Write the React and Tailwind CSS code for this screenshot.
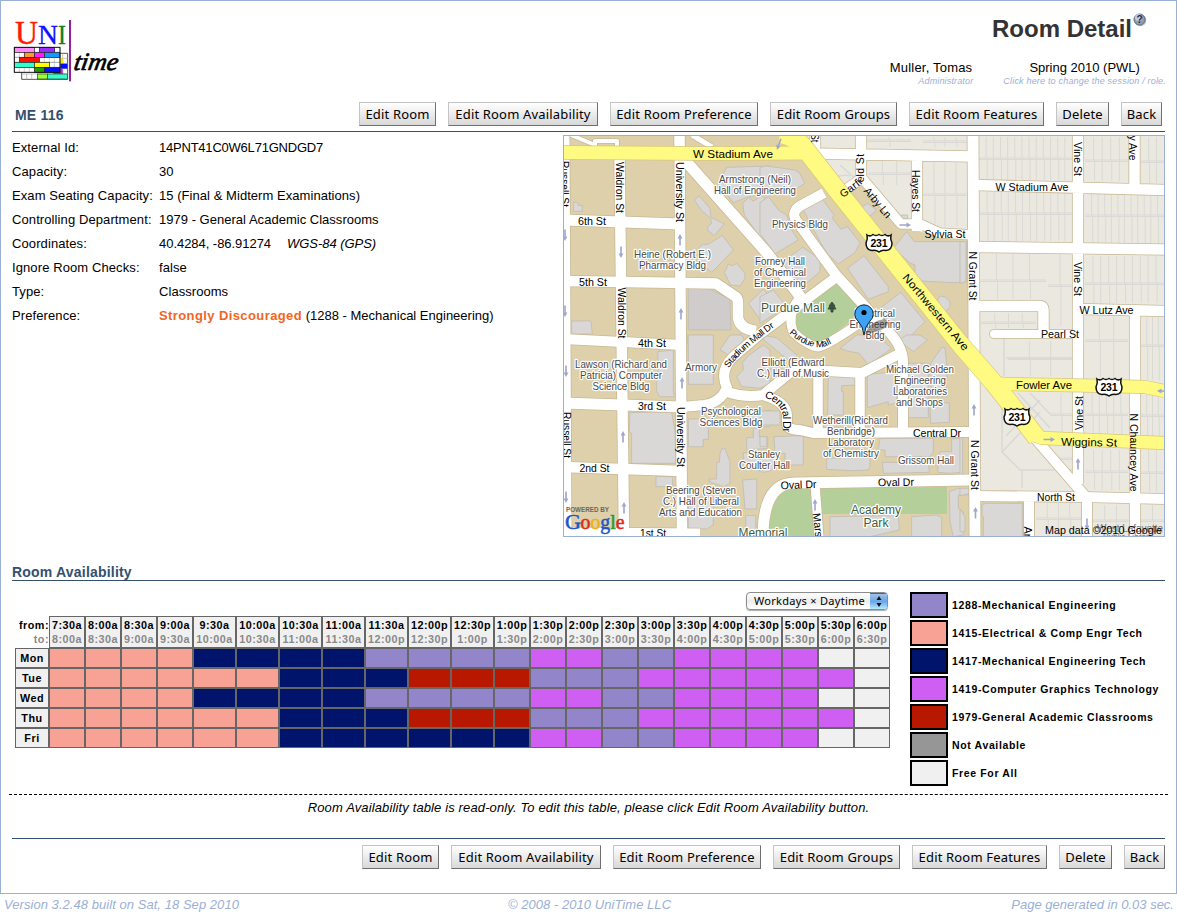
import React from "react";

const BUTTONS = [
  ["Edit Room", "w-[77px]"],
  ["Edit Room Availability", "w-[150px]"],
  ["Edit Room Preference", "w-[148px]"],
  ["Edit Room Groups", "w-[127px]"],
  ["Edit Room Features", "w-[135px]"],
  ["Delete", "w-[53px]"],
  ["Back", "w-[41px]"],
];

function Toolbar() {
  return (
    <div className="flex gap-3">
      {BUTTONS.map(([label, width]) => (
        <button
          key={label}
          className={`${width} h-6 whitespace-nowrap border border-t-[#c4c4c4] border-l-[#c4c4c4] border-r-[#707070] border-b-[#707070] bg-linear-to-b from-white to-[#d8d8d8] p-0 text-center font-['Noto_Sans','Open_Sans',sans-serif] text-[13px] leading-[21px] tracking-[0.17px] text-black`}
        >
          {label}
        </button>
      ))}
    </div>
  );
}

function Logo() {
  const bricks = [
    [43, 142, 60, "#ff8cff"], [118, 142, 46, "#9a2cff"],
    [73, 157, 30, "#ff9933"], [103, 157, 30, "#ff1eff"], [133, 157, 47, "#1498ff"],
    [58, 172, 60, "#ff1000"],
    [43, 187, 60, "#33ffcc"], [103, 187, 45, "#ffff00"],
    [103, 202, 30, "#1f9a00"], [133, 202, 47, "#0010ff"],
  ];
  const v = [43, 58, 73, 88, 103, 118, 133, 148, 163, 180];
  return (
    <svg width="112" height="68" viewBox="10 16 112 68" className="block">
      <g transform="scale(.33333)">
        <path d="M65 160H203V238H65Z" fill="#fff" stroke="#555" strokeWidth="3" />
        <path d="M65 222H203M80 222V238M95 222V238M188 160V222M180 175H203M180 190H203M180 206H203" stroke="#aaa" strokeWidth="2" />
        <path d="M180 175h10v15h-10z" fill="#f2e800" />
        <path d="M180 191h22v15h-22z" fill="#0010ff" />
        <path d="M160 206h28v16h-28z" fill="#e010e0" />
        <rect x="112" y="222" width="30" height="15" fill="#99ff33" stroke="#333" strokeWidth="2" />
        <rect x="142" y="222" width="61" height="15" fill="#33ffcc" stroke="#333" strokeWidth="2" />
        <rect x="43" y="142" width="137" height="75" fill="#fff" />
        {v.map((x) => <path key={x} d={`M${x} 142V217`} stroke="#bbb" strokeWidth="2" />)}
        {[157, 172, 187, 202].map((y) => <path key={y} d={`M43 ${y}H180`} stroke="#777" strokeWidth="2" />)}
        {bricks.map(([x, y, w, c], i) => <rect key={i} x={x} y={y} width={w} height="15" fill={c} stroke="#222" strokeWidth="2" />)}
        <rect x="43" y="142" width="137" height="75" fill="none" stroke="#111" strokeWidth="3" />
        <rect x="207" y="60" width="6" height="184" fill="#9420a0" />
      </g>
      <g fontFamily="Liberation Serif, serif">
        <text x="15" y="44" fontSize="34" fill="#ff1a00" stroke="#ff1a00" strokeWidth=".4" textLength="23" lengthAdjust="spacingAndGlyphs">U</text>
        <text x="38" y="44" fontSize="27" fill="#1010ff" stroke="#1010ff" strokeWidth=".3" textLength="20" lengthAdjust="spacingAndGlyphs">N</text>
        <text x="58" y="44" fontSize="27" fill="#128012" stroke="#128012" strokeWidth=".3" textLength="8" lengthAdjust="spacingAndGlyphs">I</text>
        <text transform="translate(73 70) skewX(-10)" fontSize="25" fontStyle="italic" fill="#000" stroke="#000" strokeWidth=".7" textLength="44" lengthAdjust="spacingAndGlyphs">time</text>
      </g>
    </svg>
  );
}

const ROADS = [
  ["M565 135L567 537", 9],
  ["M619.5 155L624 537", 10.5],
  ["M679.5 135L682 537", 10.5],
  ["M563 220L680 224", 11],
  ["M563 281L716 283.500L736 297Q738 299 738 303V318Q740 329 756 331", 10.5],
  ["M563 339L682 345", 10],
  ["M563 403L682 407", 11],
  ["M563 467L682 471", 10.5],
  ["M563 532L700 533", 9],
  ["M571 135L595 145M595 150V141H617V150", 4],
  ["M692 135L712 147", 5],
  ["M683 158L767 253L802 299", 11],
  ["M682 407L704 405Q720 403 727 388Q719 371 733 357L760 334L835 278", 10],
  ["M824 193L800 206Q791 212 796 220L836 275L882 325Q903 344 903 362V432", 10],
  ["M798 300Q787 315 793 332Q806 345 818 347Q829 345 868 317", 9],
  ["M727 392Q745 398 763 395L792 371H827L862 373L903 352", 10],
  ["M763 395Q787 402 787 416V424Q788 430 800 430L813 433L970 432", 10],
  ["M818 372V432M860 372V432", 9.5],
  ["M763 537Q763 483 795 483L970 480", 11],
  ["M815 484L819 537", 9],
  ["M973 135L975 537", 11],
  ["M812 153.5L973 156.5M815 135V152M861 135V180M917 155V231", 10.5],
  ["M842 192L862 178L901 224H920L940 233L974 235", 9.5],
  ["M975 185L1165 190M975 247L1165 249.5M1078 135V484M1134.5 135V188M1135 311V537M1078 309L1165 311", 10.5],
  ["M975 306H1040Q1043.500 306 1043.500 310V334", 10.5],
  ["M994 334H1078", 8],
  ["M975 496L1085 497L1165 499M1029 498V537M1087 496V537", 10],
  ["M1033 436L1086 497", 10],
];

const YELLOW = [
  ["M563 152.500L700 153.500L806 153", 13],
  ["M780 134Q797 137 806 150L837 190L960 344L993 382L1027 425L1037 438", 18],
  ["M990 383L1006 384L1110 386L1145 387L1165 391", 12.5],
  ["M1030 434L1042 438L1165 443", 12.5],
];

/* Building footprints, one list per 210px map tile, in thirds of a pixel. */
const BUILDINGS = [
  [560, 130, [
    "M41 215L55 220V226H67V244H41Z", "M35 573H93L97 612H35Z",
    "M403 210L418 198L450 235L453 262L493 282L462 317L443 300V290L455 280L452 265L423 240Z",
    "M417 352L430 343H445L487 316L520 360L487 395L455 427L410 390Z",
    "M493 428L505 402L517 408L530 400L555 430V445L540 468L512 465Z",
    "M385 475H445L510 508L513 600H385Z", "M382 617H460V640H382Z",
    "M500 112L630 108V190L565 200L520 218L475 160Z",
    "M548 220L565 203L580 213L605 198L630 215V340L605 328L553 255Z",
    "M565 520L598 490L610 478L630 500V560L605 575Z", "M540 610L560 640H510Z",
  ]],
  [760, 130, [
    "M0 112L20 108L105 120L118 128L135 160L103 180L0 190Z",
    "M0 218L25 200L55 240L80 255L95 300L115 330L45 372L0 310Z",
    "M130 240L188 208L222 255L217 265L243 298L262 290L300 338L285 368L235 402L205 375L180 335Z",
    "M55 405L128 352L180 388V425L130 468L95 430Z",
    "M263 415L312 377L385 470V485L325 508Z",
    "M305 232L322 220L350 240L325 262L305 250Z",
    "M400 355L440 305L463 335H620V455L580 458L465 452V405L452 400Z",
    "M360 535L422 487L495 575L430 640L395 610Z",
    "M528 520L540 498L555 500L570 515V530L555 548L535 545Z", "M425 255H443V267H425Z",
    "M0 500L40 480L80 530L0 580Z",
  ]],
  [960, 130, ["M0 335H18V455L0 460Z"]],
  [560, 335, [
    "M385 0H460V148H385Z", "M293 50L340 45V170L343 185H300L290 170V140L297 130Z",
    "M210 233L335 230L345 290L348 385H215V295L208 290Z",
    "M385 252H445V313H430V335H385Z", "M385 487H460V570L440 582L385 580Z",
    "M480 355L487 340H495L500 355L510 380V445L490 455L448 440V432H470V382H478Z",
    "M288 425H338V455H288Z", "M480 45L510 0H545L560 30L515 65Z",
    "M530 125L550 105L548 82L565 62L610 30L630 45V145L600 160L545 155Z",
    "M580 280H598V305H623V340L560 345V308H580Z", "M548 435L590 432V522H555Z",
    "M557 542H587V585H557Z", "M560 240L630 225V275H600Z", "M550 353H630V405Q580 415 550 388Z",
  ]],
  [760, 335, [
    "M0 0L50 8L112 62L90 80L0 5Z", "M240 40L290 0H350L395 40L325 90L298 55L262 48Z",
    "M415 15L440 0H480L502 15L460 50Z", "M205 122L288 120V150L245 152V170H250V240H203Z",
    "M322 118L410 110V203L385 210V200L322 218Z", "M433 85H505V248H433Z",
    "M512 85L545 38H555L560 88V185H515Z", "M510 205L568 203V262L512 265Z",
    "M360 310H520V350L510 365H375V345H355Z", "M367 382H505L508 412L370 415Z",
    "M535 360L540 350H575V312L600 310L607 395V412L570 415L533 412Z",
    "M42 305L130 302V390H75V355H45Z", "M0 228H60V270H0Z", "M200 370L330 368V395L325 405L275 407L200 403Z",
    "M0 305H20V335H0Z", "M568 470L595 460L625 463V480H595V520L610 530V600L580 605L570 560Z",
    "M455 545L530 540L545 548V605H455Z", "M210 545L415 542L418 585L330 605H210Z",
    "M0 360H40V400Q25 415 0 410Z",
  ]],
  [960, 335, ["M0 308H8V418H0Z", "M0 460H28V475L0 482Z", "M0 523L15 545V590H0Z", "M66 508L80 505H187V610H70V545L66 540Z"]],
];

/* Parcel blocks: x, top, right, bottom, horizontal split, number of lots. */
const PARCELS = [
  [979, 137, 1072, 180, 158, 13], [1085, 137, 1128, 181, 160, 5], [1141, 137, 1164, 183, 161, 3],
  [980, 192, 1072, 241, 213, 13], [1085, 194, 1164, 243, 215, 12],
  [980, 254, 1046, 299, 280, 4], [1048, 254, 1072, 326, 285, 2], [1085, 256, 1164, 303, 283, 10],
  [981, 313, 1036, 328, 322, 4], [1085, 317, 1128, 378, 340, 3], [1141, 317, 1164, 380, 345, 4],
  [1008, 341, 1072, 376, 358, 3], [867, 137, 911, 147, 140, 2], [923, 137, 967, 147, 141, 4],
  [868, 161, 911, 185, 173, 3], [923, 161, 967, 227, 194, 4], [1085, 393, 1128, 434, 414, 6],
  [1141, 395, 1164, 436, 415, 4], [1085, 450, 1128, 490, 471, 5], [1141, 450, 1164, 492, 472, 3],
  [1050, 393, 1072, 434, 414, 2], [1050, 448, 1072, 468, 458, 1],
  [1036, 503, 1081, 536, 518, 4], [1093, 505, 1128, 536, 520, 3], [1141, 505, 1164, 536, 520, 2],
];

function Parcels() {
  let d = "";
  PARCELS.forEach(([x, y, r, b, m, n]) => {
    d += `M${x} ${m}H${r}M${x} ${m + 1.5}H${r}`;
    for (let i = 1; i < n; i++) {
      const lx = x + ((r - x) * i) / n;
      d += `M${lx} ${y}V${m}M${lx + (i % 2)} ${m}V${b}`;
    }
  });
  return <path d={d} fill="none" stroke="#dad9d6" strokeWidth="1" />;
}

/* Text, centre x, centre y, length, rotation. */
const STREETS = [
  ["W Stadium Ave", 733, 154, 80, 0], ["6th St", 592, 220.5, 28, 0], ["5th St", 593, 282, 28, 0],
  ["4th St", 652, 343, 28, 0], ["3rd St", 652, 406, 28, 0], ["2nd St", 594.5, 467.500, 30, 0],
  ["1st St", 653, 532.5, 26, 0], ["Russell St", 565, 184, 46, 90], ["Waldron St", 620, 187.5, 51, 90],
  ["University St", 680, 192, 60, 90], ["Waldron St", 621.5, 313, 51, 90], ["Russell St", 566.5, 435, 46, 90],
  ["University St", 681, 437, 60, 90], ["Hayes St", 916, 191, 42, 90], ["N Grant St", 973, 276, 49, 90],
  ["N Grant St", 975, 465, 50, 90], ["Vine St", 1077.500, 159, 34, 90], ["Vine St", 1077.500, 279, 34, 90],
  ["Vine St", 1079, 413, 34, -90], ["N Chauncey Ave", 1134, 452.500, 78, 90], ["y Ave", 1133, 148, 25, 90],
  ["Ar", 1028, 532, 11, 90], ["Mars", 818, 525, 24, 83], ["St", 815, 138, 9, 90],
  ["Arby Ln", 878, 202.5, 36, 50], ["Sylvia St", 945, 234, 41, 0], ["W Stadium Ave", 1032, 186.5, 73, 0],
  ["W Lutz Ave", 1106.500, 310, 54, 0], ["Pearl St", 1060, 333.500, 38, 0], ["Fowler Ave", 1044, 385, 56, 0],
  ["Wiggins St", 1089, 442, 56, 1], ["North St", 1056, 497, 38, 0], ["Central Dr", 937, 432.500, 48, 0],
  ["Oval Dr", 798.5, 484.500, 36, -2], ["Oval Dr", 896, 482, 36, -1], ["Northwestern Ave", 936, 312, 96, 50],
];

const PLACES = [
  ["Armstrong (Neil)", 755, 179.5, 72], ["Hall of Engineering", 755, 190.500, 82],
  ["Physics Bldg", 800, 224.500, 56], ["Heine (Robert E.)", 672.500, 254.500, 77], ["Pharmacy Bldg", 672.500, 265.500, 67],
  ["Forney Hall", 780, 261.5, 50], ["of Chemical", 780, 272.500, 52], ["Engineering", 780, 283.500, 52],
  ["Electrical", 875, 313.500, 40], ["Engineering", 875, 324.5, 51], ["Bldg", 875, 335.5, 19],
  ["Elliott (Edward", 793, 362.5, 63], ["C.) Hall of Music", 793, 373.5, 72],
  ["Michael Golden", 920, 369.5, 68], ["Engineering", 920, 380.500, 52], ["Laboratories", 920, 391.5, 54], ["and Shops", 919.500, 402.500, 47],
  ["Lawson (Richard and", 621, 364.500, 92], ["Patricia) Computer", 621, 375.500, 82], ["Science Bldg", 621, 386.500, 57],
  ["Armory", 701, 367.5, 32], ["Psychological", 731, 411.5, 60], ["Sciences Bldg", 731, 422.5, 63],
  ["Wetherill(Richard", 850.500, 420.500, 75], ["Benbridge)", 851, 431.5, 48], ["Laboratory", 851, 442.500, 46], ["of Chemistry", 851, 453.500, 56],
  ["Stanley", 764, 454.5, 32], ["Coulter Hall", 764.500, 465.500, 51], ["Grissom Hall", 926, 460.500, 56],
  ["Beering (Steven", 701, 490.500, 70], ["C.) Hall of Liberal", 701, 501.500, 76], ["Arts and Education", 700.500, 512.500, 83],
];

function Shield({ x, y }) {
  return (
    <g transform={`translate(${x} ${y})`}>
      <path d="M-12 -8Q-9 -6 -6 -8.500Q-3 -6.500 0 -8.500Q3 -6.500 6 -8.500Q9 -6 12 -8Q11 -4 13 0Q13 7 7 7.500Q3 6.500 0 9Q-3 6.500 -7 7.500Q-13 7 -13 0Q-11 -4 -12 -8Z" fill="#fff" stroke="#111" strokeWidth="1.500" />
      <text textAnchor="middle" y="3.500" fontSize="10.500" fontWeight="bold" textLength="17">231</text>
    </g>
  );
}

function CampusMap() {
  const arrows = [
    [621, 252, 90], [680, 240, -90], [681, 314, -90], [565, 235, 90], [565, 311, 90], [682, 383, -90],
    [623, 437, -90], [624, 508, -90], [566, 371, 90], [566, 497, 90], [815, 505, -90], [974, 410, -90],
    [975.500, 513, -90], [1078, 464, -90], [905, 225, 0], [1049, 439.500, 0], [1087, 524, 90], [779, 144, 110], [1163, 391, 180],
  ];
  return (
    <svg width="602" height="402" viewBox="563 135 602 402" className="block shrink-0" fontFamily="Liberation Sans, Arial, sans-serif">
      <rect x="563" y="135" width="602" height="402" fill="#ddd0aa" />
      <path d="M806 135H1165V537H974V238L935 236L905 230L862 182L845 194L815 155Z" fill="#ebe8e0" />
      <path d="M844 195L862 183L900 226L940 237H974V345L960 340Z" fill="#ddd0aa" />
      <path d="M974 500H1026V537H974Z" fill="#ddd0aa" />
      <Parcels />
      <path d="M1004 338V376M1006 358H1072M1002 394V452L1020 470H1072M1002 452L1040 412M1030 393L1050 414M1018 393L1050 428M1006 436L1040 400M1022 470V488M827 188Q835 172 850 176M840 165L868 190" fill="none" stroke="#d9d8d5" strokeWidth="1.500" />
      <path d="M835 281L861 309L848 323L828 339Q814 345 802 335Q789 322 799 303Z" fill="#b5cf9a" />
      <path d="M769 537Q769 489 795 489H812L815 537Z" fill="#b5cf9a" />
      <path d="M821 488L947 487V514H821Z" fill="#b5cf9a" />
      {BUILDINGS.map(([x, y, shapes], i) => (
        <g key={i} transform={`translate(${x} ${y}) scale(.33333)`}>
          {shapes.map((d, j) => <path key={j} d={d} fill={j === 5 && i === 0 ? "#d0cccb" : "#d9d8d7"} stroke="#c2bdb2" strokeWidth="2.500" />)}
        </g>
      ))}
      <g fill="none" strokeLinejoin="round">
        {ROADS.map(([d, w], i) => <path key={i} d={d} stroke="#c8b994" strokeWidth={w + 1.6} strokeLinecap={w === 8 ? "round" : "butt"} />)}
        {ROADS.map(([d, w], i) => <path key={i} d={d} stroke="#fff" strokeWidth={w} strokeLinecap={w === 8 ? "round" : "butt"} />)}
        {YELLOW.map(([d, w], i) => <path key={i} d={d} stroke="#d9c77c" strokeWidth={w + 1.4} />)}
        {YELLOW.map(([d, w], i) => <path key={i} d={d} stroke="#fffa82" strokeWidth={w} />)}
      </g>
      {arrows.map(([x, y, a], i) => (
        <path key={i} transform={`translate(${x} ${y}) rotate(${a})`} d="M-5.500 -.8H1.500V-2.400L6 0L1.500 2.400V.8H-5.500Z" fill="#a0a5cc" />
      ))}
      <g fontSize="11" fill="#000" textAnchor="middle">
        {STREETS.map(([t, x, y, w, a], i) => (
          <text key={i} transform={`translate(${x} ${y}) rotate(${a})`} y="4" textLength={w} lengthAdjust="spacingAndGlyphs">{t}</text>
        ))}
      </g>
      <defs>
        <path id="garfield" d="M843 198L858 187Q864 183 864 178V140" />
        <path id="central" d="M764 397Q782 404 783 417V440" />
        <path id="stadium-mall" d="M729 368Q737 354 777 325" />
        <path id="purdue-mall" d="M789 333Q806 349 823 347Q829 345 834 342" />
      </defs>
      <g fontSize="10.500" fill="#000">
        <text><textPath href="#garfield" textLength="54">Garfield St</textPath></text>
        <text><textPath href="#central" textLength="44">Central Dr</textPath></text>
        <text fontSize="9.500"><textPath href="#stadium-mall" textLength="62">Stadium Mall Dr</textPath></text>
        <text fontSize="9"><textPath href="#purdue-mall" textLength="47">Purdue Mall</textPath></text>
      </g>
      <g fontSize="10.500" fill="#484848" textAnchor="middle" stroke="#fff" strokeWidth="2.400" strokeLinejoin="round" paintOrder="stroke">
        {PLACES.map(([t, x, y, w], i) => (
          <text key={i} x={x} y={y + 3.5} textLength={w} lengthAdjust="spacingAndGlyphs">{t}</text>
        ))}
        <g fill="#3d5f3d" fontSize="12">
          <text x="793" y="311.500" textLength="64" lengthAdjust="spacingAndGlyphs">Purdue Mall</text>
          <text x="876" y="514" textLength="50" lengthAdjust="spacingAndGlyphs">Academy</text>
          <text x="876" y="527" textLength="25" lengthAdjust="spacingAndGlyphs">Park</text>
          <text x="763" y="537" textLength="49" lengthAdjust="spacingAndGlyphs">Memorial</text>
        </g>
      </g>
      <path d="M832 302L835 306H834L836 309H833V312H831V309H828L830 306H829Z" fill="#3d4f3d" stroke="#3d4f3d" />
      <Shield x={879} y={243} />
      <Shield x={1109} y={387} />
      <Shield x={1017} y={417} />
      <path d="M865 334Q870 321 884 319Q891 322 885 328Q877 332 865 334Z" fill="#333" opacity=".45" />
      <path d="M864 335Q863 326 858 321A9.200 9.200 0 1 1 870 321Q865 326 864 335Z" fill="#3fa3f5" stroke="#123" strokeWidth="1" />
      <circle cx="864" cy="312.500" r="2.600" fill="#000" />
      <text x="566" y="512" fontSize="7" fontWeight="bold" fill="#6b675c" textLength="43" lengthAdjust="spacingAndGlyphs">POWERED BY</text>
      <g fontFamily="Liberation Serif, serif" strokeWidth=".5">
        <text x="565" y="529" fontSize="22" fill="#1c56c8" stroke="#1c56c8" textLength="16" lengthAdjust="spacingAndGlyphs">G</text>
        <text x="580.500" y="529" fontSize="21" textLength="44" lengthAdjust="spacingAndGlyphs">
          <tspan fill="#dc2a20" stroke="#dc2a20">o</tspan><tspan fill="#eeb211" stroke="#eeb211">o</tspan><tspan fill="#1c56c8" stroke="#1c56c8">g</tspan><tspan fill="#239a3c" stroke="#239a3c">l</tspan><tspan fill="#dc2a20" stroke="#dc2a20">e</tspan>
        </text>
      </g>
      <g fontSize="10">
        <text x="1097" y="532" fill="#777" textLength="66" lengthAdjust="spacingAndGlyphs">West Lafayette</text>
        <text x="1103" y="541" fill="#777" textLength="50" lengthAdjust="spacingAndGlyphs">Public Library</text>
        <text x="1045" y="534" fontSize="11" fill="#000" textLength="117" lengthAdjust="spacingAndGlyphs">Map data ©2010 Google</text>
      </g>
      <rect x="563.500" y="135.500" width="601" height="401" fill="none" stroke="#9bb0d6" />
    </svg>
  );
}

const DETAILS = [
  ["External Id:", <span className="tracking-[-0.22px]">14PNT41C0W6L71GNDGD7</span>],
  ["Capacity:", "30"],
  ["Exam Seating Capacity:", "15 (Final & Midterm Examinations)"],
  ["Controlling Department:", <span className="tracking-[0.02px]">1979 - General Academic Classrooms</span>],
  ["Coordinates:", <span className="tracking-[-0.04px]">40.4284, -86.91274<i className="ml-4">WGS-84 (GPS)</i></span>],
  ["Ignore Room Checks:", "false"],
  ["Type:", "Classrooms"],
  ["Preference:", <span className="tracking-normal"><b className="tracking-[0.4px] text-[#f26522]">Strongly Discouraged</b> (1288 - Mechanical Engineering)</span>],
];

const TIMES = "7:30a 8:00a 8:30a 9:00a 9:30a 10:00a 10:30a 11:00a 11:30a 12:00p 12:30p 1:00p 1:30p 2:00p 2:30p 3:00p 3:30p 4:00p 4:30p 5:00p 5:30p 6:00p 6:30p".split(" ");

const FILL = {
  P: "bg-[#9385c9]", S: "bg-[#f7a294]", N: "bg-[#00146b]", M: "bg-[#cf5ff3]", R: "bg-[#b81700]", X: "bg-[#969696]", F: "bg-[#f0f0f0]",
};

const WEEK = [
  ["Mon", "SSSSNNNNPPPPMMPPMMMMFF"],
  ["Tue", "SSSSSSNNNRRRPPPMMMMMMF"],
  ["Wed", "SSSSNNNNPPPPMMPPMMMMFF"],
  ["Thu", "SSSSSSNNNRRRPPPMMMMMMF"],
  ["Fri", "SSSSSSNNNNNNMMPPMMMMFF"],
];

const LEGEND = [
  ["P", "1288-Mechanical Engineering"],
  ["S", "1415-Electrical & Comp Engr Tech"],
  ["N", "1417-Mechanical Engineering Tech"],
  ["M", "1419-Computer Graphics Technology"],
  ["R", "1979-General Academic Classrooms"],
  ["X", "Not Available"],
  ["F", "Free For All"],
];

function Availability() {
  return (
    <div className="ml-[14px] w-[875px] pt-[11px] text-[10.8px] font-bold tracking-[0.5px]">
      <div className="mb-1.5 flex justify-end pr-0.5">
        <div className="flex h-[18px] w-[142px] items-stretch overflow-hidden rounded-[4px] border border-[#8c8c8c] bg-linear-to-b from-white via-[#ededed] to-white font-['Noto_Sans','Open_Sans',sans-serif] text-[11px] font-normal tracking-[0.28px] shadow-[0_1px_1px_#aaa]">
          <span className="flex-1 whitespace-nowrap pl-[7px] leading-4">Workdays × Daytime</span>
          <span className="flex w-[17px] items-center justify-center border-t border-[#4a5fb0] bg-linear-to-b from-[#9cc0ec] via-[#6ba6e6] to-[#b5ecff]">
            <svg width="6" height="11" viewBox="0 0 6 11"><path d="M.5 4L3 0L5.500 4ZM.5 7L3 11L5.500 7Z" fill="#111" /></svg>
          </span>
        </div>
      </div>
      <div className="grid grid-cols-[34px_repeat(4,36px)_repeat(7,43px)_repeat(11,36px)]">
        <div className="h-8 pt-0.5 text-right leading-[14px]">
          <div className="-ml-2">from:</div>
          <div className="text-[#888]">to:</div>
        </div>
        {TIMES.slice(0, 22).map((t, i) => (
          <div key={t} className="flex h-8 flex-col items-center border border-[#666] bg-[#f0f0f0] pt-px leading-[14px]">
            <span>{t}</span>
            <span className="text-[#888]">{TIMES[i + 1]}</span>
          </div>
        ))}
        {WEEK.map(([day, slots]) => (
          <React.Fragment key={day}>
            <div className="h-5 border border-[#666] bg-[#f0f0f0] text-center leading-[19px]">{day}</div>
            {slots.split("").map((s, i) => (
              <div key={i} className={`h-5 border border-[#666] ${FILL[s]}`} />
            ))}
          </React.Fragment>
        ))}
      </div>
    </div>
  );
}

export default function App() {
  return (
    <div className="h-[913px] w-[1177px] overflow-hidden bg-white font-['Liberation_Sans',Arial,sans-serif] text-[13px] text-black">
      <div className="h-[894px] border border-[#9bb0d6]">
        <header className="flex h-[98px] justify-between pl-[9px]">
          <div className="pt-[15px]"><Logo /></div>
          <div className="flex flex-col items-end pr-[10px]">
            <div className="flex pt-[11px] pr-[19px]">
              <h1 className="text-[24px] leading-[34px] font-bold text-[#333]">Room Detail</h1>
              <svg width="15" height="15" viewBox="0 0 15 15">
                <circle cx="8.300" cy="8.300" r="6" fill="#888" opacity=".6" />
                <circle cx="7.500" cy="7.500" r="5.500" fill="#8f9db3" stroke="#5d6b82" />
                <circle cx="6.500" cy="5.500" r="3.500" fill="#c3cddb" />
                <text x="7.500" y="11" fontSize="10" fontWeight="bold" textAnchor="middle" fill="#1d2a44">?</text>
              </svg>
            </div>
            <div className="mt-[14px] flex gap-[30px]">
              <div className="text-right">
                <div className="pr-px leading-4 tracking-[0.2px]">Muller, Tomas</div>
                <div className="text-[9px] leading-[11px] tracking-[0.15px] text-[#9bb0d6] italic">Administrator</div>
              </div>
              <div className="text-center">
                <div className="leading-4">Spring 2010 (PWL)</div>
                <div className="text-[9px] leading-[11px] tracking-[0.19px] text-[#9bb0d6] italic">Click here to change the session / role.</div>
              </div>
            </div>
          </div>
        </header>

        <div className="mx-[11px] flex h-[33px] justify-between border-b border-[#34506e] pt-[3px] pr-[3px] pl-[3px]">
          <h2 className="text-[14px] leading-[26px] font-bold tracking-[0.2px] text-[#34506e]">ME 116</h2>
          <Toolbar />
        </div>

        <section className="mx-[11px] flex justify-between pt-[3px]">
          <dl className="grid grid-cols-[147px_auto] content-start pt-px leading-6 tracking-[0.05px]">
            {DETAILS.map(([k, v]) => (
              <React.Fragment key={k}>
                <dt className="whitespace-nowrap tracking-[0.1px]">{k}</dt>
                <dd className="whitespace-nowrap">{v}</dd>
              </React.Fragment>
            ))}
          </dl>
          <CampusMap />
        </section>

        <h2 className="mx-[11px] flex h-[44px] items-end border-b border-[#34506e] text-[14px] leading-[15px] font-bold tracking-[0.2px] text-[#34506e]">Room Availability</h2>

        <section className="flex h-[213px]">
          <Availability />
          <ul className="ml-5 flex flex-col gap-0.5 pt-[11px]">
            {LEGEND.map(([code, label]) => (
              <li key={code} className="flex h-[26px] items-center gap-1 text-[10.5px] font-bold tracking-[0.64px] whitespace-nowrap">
                <span className={`h-[26px] w-[38px] border-2 border-black ${FILL[code]}`} />
                <span className="pt-0.5">{label}</span>
              </li>
            ))}
          </ul>
        </section>

        <div className="mx-2 h-[25px] border-t border-dashed border-black text-center leading-[26px] tracking-[0.13px] italic">
          Room Availability table is read-only. To edit this table, please click Edit Room Availability button.
        </div>

        <div className="mx-[11px] mt-[19px] flex justify-end border-t border-[#34506e] pt-1.5">
          <Toolbar />
        </div>
      </div>

      <footer className="grid h-[19px] grid-cols-3 px-1 leading-[21px] tracking-[0.05px] text-[#9bb0d6] italic">
        <span>Version 3.2.48 built on Sat, 18 Sep 2010</span>
        <span className="pl-0.5 text-center">© 2008 - 2010 UniTime LLC</span>
        <span className="-mr-px text-right tracking-normal">Page generated in 0.03 sec.</span>
      </footer>
    </div>
  );
}
